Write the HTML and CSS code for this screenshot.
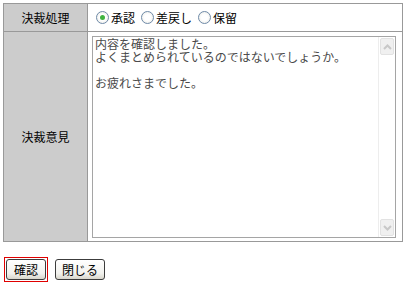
FILE: index.html
```html
<!DOCTYPE html>
<html lang="ja">
<head>
  <meta charset="UTF-8">
  <title>決裁</title>
  <link rel="stylesheet" href="styles.css">
</head>
<body>
  <table class="form-table">
    <tr class="row-action">
      <th>決裁処理</th>
      <td>
        <div class="radios">
          <label><input type="radio" name="action" checked><span>承認</span></label>
          <label><input type="radio" name="action"><span>差戻し</span></label>
          <label><input type="radio" name="action"><span>保留</span></label>
        </div>
      </td>
    </tr>
    <tr class="row-comment">
      <th>決裁意見</th>
      <td>
        <div class="memo">
          <textarea>内容を確認しました。
よくまとめられているのではないでしょうか。

お疲れさまでした。</textarea>
          <div class="scrollbar">
            <span class="arrow">
              <svg width="9" height="6" viewBox="0 0 9 6"><path d="M1 5 L4.5 1.5 L8 5" fill="none" stroke="#c8c8c8" stroke-width="2"/></svg>
            </span>
            <span class="arrow">
              <svg width="9" height="6" viewBox="0 0 9 6"><path d="M1 1 L4.5 4.5 L8 1" fill="none" stroke="#c8c8c8" stroke-width="2"/></svg>
            </span>
          </div>
        </div>
      </td>
    </tr>
  </table>

  <div class="buttons">
    <span class="focus"><button>確認</button></span>
    <button>閉じる</button>
  </div>
</body>
</html>
```

FILE: styles.css
```css
body {
  margin: 3px;
  background: #fff;
  font-family: "Noto Sans CJK JP", "DejaVu Sans", sans-serif;
  font-size: 12px;
  color: #000;
}

.form-table {
  width: 400px;
  border-collapse: collapse;
  border: 1px solid #999;
}

.form-table th,
.form-table td {
  border: 1px solid #999;
  padding: 0;
}

.form-table th {
  width: 83px;
  background-color: #ccc;
  font-weight: normal;
  text-align: center;
}

.row-action th,
.row-action td {
  height: 27px;
}

.row-action td {
  padding-left: 8px;
}

.radios {
  display: flex;
  align-items: center;
  gap: 6px;
}

.radios label {
  display: flex;
  align-items: center;
  gap: 2px;
}

.radios input {
  appearance: none;
  width: 13px;
  height: 13px;
  margin: 0;
  border: 1px solid #6f8aa8;
  border-radius: 50%;
  background: radial-gradient(circle, #fff 40%, #e6e6e0 100%);
  position: relative;
}

.radios input:checked::after {
  content: "";
  position: absolute;
  left: 3px;
  top: 3px;
  width: 5px;
  height: 5px;
  border-radius: 50%;
  background: #3fb33f;
}

.row-comment td {
  padding: 4px 6px 3px 4px;
}

.memo {
  position: relative;
  width: 304px;
  height: 202px;
}

.memo textarea {
  display: block;
  box-sizing: border-box;
  width: 304px;
  height: 202px;
  margin: 0;
  padding: 0 18px 0 2px;
  border: 1px solid #a5a5a5;
  resize: none;
  overflow: hidden;
  font-family: "Noto Sans CJK JP", sans-serif;
  font-size: 12px;
  line-height: 13px;
  color: #4a4a4a;
}

.scrollbar {
  position: absolute;
  right: 1px;
  top: 1px;
  bottom: 1px;
  width: 16px;
  display: flex;
  flex-direction: column;
  justify-content: space-between;
  border-left: 1px solid #ededed;
}

.arrow {
  display: flex;
  align-items: center;
  justify-content: center;
  height: 15px;
  margin: 1px;
  background: #f0f0f0;
  border: 1px solid #e2e2e2;
  border-radius: 2px;
}

.buttons {
  display: flex;
  align-items: center;
  gap: 7px;
  margin-top: 15px;
  padding-left: 1px;
}

.focus {
  display: inline-block;
  border: 1px solid #e00000;
  padding: 1px;
}

.buttons button {
  height: 21px;
  padding: 0 6px;
  border: 1px solid #3c3c3c;
  border-radius: 3px;
  background: linear-gradient(#fff, #f2f2ee 70%, #d8d6cc);
  font-family: "Noto Sans CJK JP", sans-serif;
  font-size: 12px;
  line-height: 17px;
  color: #000;
}

.focus button {
  display: block;
  width: 40px;
}

.buttons > button {
  width: 50px;
}
```
